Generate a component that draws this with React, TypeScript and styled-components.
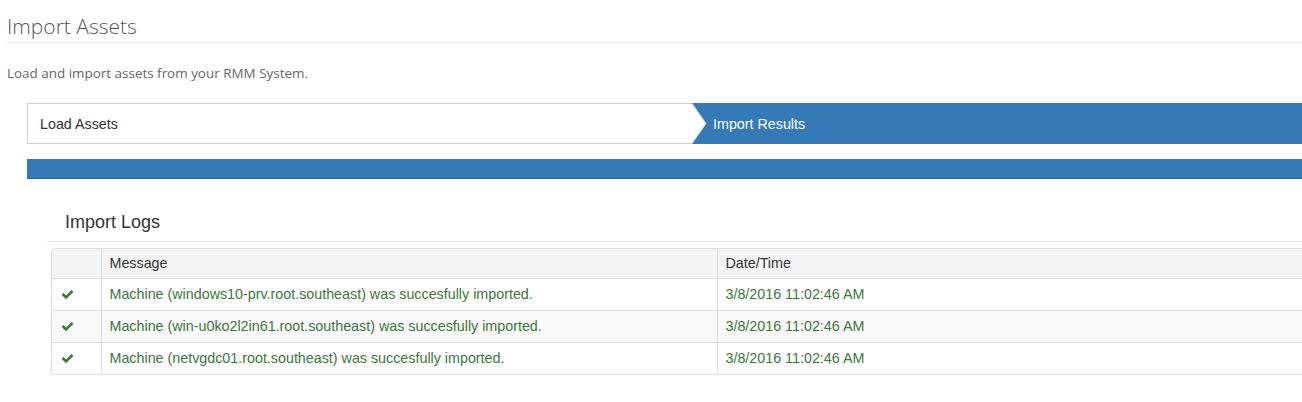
import React from "react";
import styled, { createGlobalStyle } from "styled-components";

const Global = createGlobalStyle`
  html, body { margin: 0; padding: 0; background: #fff; }
  body { overflow: hidden; width: 1302px; height: 402px; }
  * { box-sizing: border-box; }
`;

const Page = styled.div`
  width: 1302px;
  overflow: hidden;
  padding: 12px 0 0 7px;
`;

const Title = styled.h1`
  margin: 0;
  font-family: "Open Sans", sans-serif;
  font-weight: 300;
  font-size: 21px;
  line-height: 28px;
  color: #555;
  padding-bottom: 2px;
  border-bottom: 1px solid #e5e5e5;
`;

const Lead = styled.p`
  margin: 21px 0 0 0;
  font-family: "Open Sans", sans-serif;
  font-size: 13.45px;
  line-height: 18px;
  color: #666;
`;

const Content = styled.div`
  padding-left: 20px;
  margin-top: 21px;
  width: 1320px;
`;

const Steps = styled.div`
  display: flex;
  height: 41px;
  font-family: "Liberation Sans", Arial, sans-serif;
  font-size: 14.3px;
`;

const StepDone = styled.div`
  position: relative;
  width: 665px;
  flex: none;
  display: flex;
  align-items: center;
  padding-left: 12px;
  background: #fff;
  color: #333;
  border: 1px solid #ccc;
  border-right: none;
  z-index: 1;
`;

const Arrow = styled.svg`
  position: absolute;
  right: -15px;
  top: -1px;
  width: 15px;
  height: 41px;
`;

const StepActive = styled.div`
  flex: 1;
  display: flex;
  align-items: center;
  padding-left: 21px;
  background: #337ab7;
  color: #fff;
`;

const Progress = styled.div`
  margin-top: 15px;
  height: 20px;
  background: #337ab7;
  box-shadow: inset 0 -1px 0 rgba(0, 0, 0, 0.15);
`;

const Logs = styled.section`
  margin-top: 31px;
  padding-left: 20px;
`;

const LogsHeading = styled.h3`
  margin: 0;
  padding: 0 0 7px 18px;
  font-family: "Liberation Sans", Arial, sans-serif;
  font-weight: 400;
  font-size: 18px;
  line-height: 24px;
  color: #333;
  border-bottom: 1px solid #e5e5e5;
`;

const Panel = styled.div`
  margin: 6px 0 0 4px;
  border: 1px solid #ddd;
  border-radius: 4px 0 0 4px;
  box-shadow: 0 1px 1px rgba(0, 0, 0, 0.12);
  overflow: hidden;
`;

const Table = styled.table`
  width: 100%;
  border-collapse: collapse;
  font-family: "Liberation Sans", Arial, sans-serif;
  font-size: 14.3px;
`;

const Th = styled.th<{ $w?: number }>`
  width: ${(p) => (p.$w ? `${p.$w}px` : "auto")};
  text-align: left;
  font-weight: 400;
  color: #333;
  background: #f4f4f4;
  height: 29px;
  padding: 0 8px;
  border-left: 1px solid #ddd;
  border-bottom: 1px solid #ddd;
  &:first-child { border-left: none; }
`;

const Tr = styled.tr<{ $striped?: boolean }>`
  background: ${(p) => (p.$striped ? "#f9f9f9" : "#fff")};
`;

const Td = styled.td`
  height: 32px;
  padding: 0 8px;
  color: #3c763d;
  border-left: 1px solid #ddd;
  border-top: 1px solid #ddd;
  vertical-align: middle;
  &:first-child { border-left: none; padding-left: 9px; }
  tr:first-child > & { border-top: none; }
`;

const Check = styled.svg`
  display: block;
  width: 13px;
  height: 11px;
  fill: #3c763d;
`;

const CheckIcon = () => (
  <Check viewBox="0 0 13 11">
    <path d="M0.5 5.8 L2.4 3.9 L5 6.5 L10.6 0.9 L12.5 2.8 L5 10.3 Z" />
  </Check>
);

const rows = [
  "Machine (windows10-prv.root.southeast) was succesfully imported.",
  "Machine (win-u0ko2l2in61.root.southeast) was succesfully imported.",
  "Machine (netvgdc01.root.southeast) was succesfully imported.",
];

export default function App() {
  return (
    <>
      <Global />
      <Page>
        <Title>Import Assets</Title>
        <Lead>Load and import assets from your RMM System.</Lead>
        <Content>
          <Steps>
            <StepDone>
              Load Assets
              <Arrow viewBox="0 0 15 41">
                <polygon points="0,0 14,20.5 0,41" fill="#fff" />
                <polyline points="0,0.5 14,20.5 0,40.5" fill="none" stroke="#d4d4d4" strokeWidth="1" />
              </Arrow>
            </StepDone>
            <StepActive>Import Results</StepActive>
          </Steps>
          <Progress />
          <Logs>
            <LogsHeading>Import Logs</LogsHeading>
            <Panel>
              <Table>
                <thead>
                  <tr>
                    <Th $w={49}></Th>
                    <Th $w={616}>Message</Th>
                    <Th>Date/Time</Th>
                  </tr>
                </thead>
                <tbody>
                  {rows.map((m, i) => (
                    <Tr key={i} $striped={i === 1}>
                      <Td>
                        <CheckIcon />
                      </Td>
                      <Td>{m}</Td>
                      <Td>3/8/2016 11:02:46 AM</Td>
                    </Tr>
                  ))}
                </tbody>
              </Table>
            </Panel>
          </Logs>
        </Content>
      </Page>
    </>
  );
}
